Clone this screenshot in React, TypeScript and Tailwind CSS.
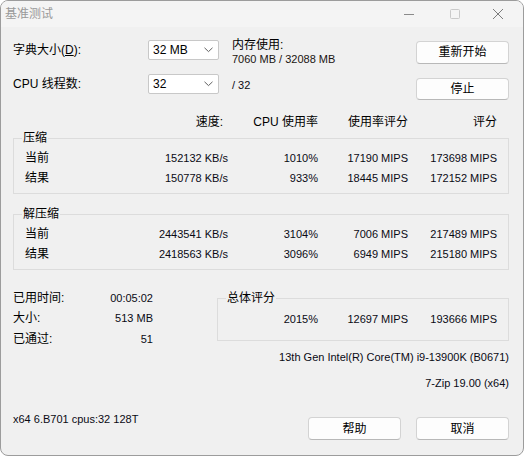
import React from "react";

const FONT = "font-['Liberation_Sans','Noto_Sans_CJK_SC',sans-serif]";

function Combo({ value }: { value: string }) {
  return (
    <div className="w-[71px] h-[20px] bg-white border border-[#c8c8c8] rounded-[2px] flex items-center justify-between pl-[4px] pr-[5px]">
      <span className="text-[12px] leading-[14px] text-black">{value}</span>
      <svg width="9" height="6" viewBox="0 0 9 6">
        <path d="M0.5 0.8 L4.5 4.6 L8.5 0.8" fill="none" stroke="#606060" strokeWidth="1" />
      </svg>
    </div>
  );
}

function Btn({ label }: { label: string }) {
  return (
    <div className="w-[93px] h-[23px] bg-[#fdfdfd] border border-[#d3d3d3] border-b-[#b8b8b8] rounded-[4px] flex items-center justify-center text-[12px] leading-[14px] text-black">
      {label}
    </div>
  );
}

function Group({ label, children, className }: { label: string; children: React.ReactNode; className?: string }) {
  return (
    <div className={"relative border border-[#dcdcdc] " + (className ?? "")}>
      <span className="absolute left-[8px] top-[-9px] px-[1px] bg-[#f0f0f0] text-[12px] leading-[16px] text-black">
        {label}
      </span>
      {children}
    </div>
  );
}

function DataRow({ label, cells }: { label: string; cells: string[] }) {
  return (
    <div className="flex h-[20px] items-center text-[11px] leading-[14px] text-[#0a0a14]">
      <div className="w-[134px] pl-[11px] text-[12px] text-black">{label}</div>
      <div className="w-[80px] text-right">{cells[0]}</div>
      <div className="w-[90px] text-right">{cells[1]}</div>
      <div className="w-[90px] text-right">{cells[2]}</div>
      <div className="w-[89px] text-right">{cells[3]}</div>
    </div>
  );
}

export default function App() {
  return (
    <div className={"w-[524px] h-[456px] bg-[#f0f0f0] border border-[#9c9c9c] rounded-[8px] overflow-hidden flex flex-col " + FONT}>
      {/* Title bar */}
      <div className="h-[26px] bg-[#f4f4f4] flex items-center shrink-0">
        <span className="ml-[4px] text-[12px] leading-[14px] text-[#999999]">基准测试</span>
        <div className="ml-auto flex items-center">
          <svg width="12" height="12" viewBox="0 0 12 12" className="mr-[34px]">
            <path d="M1 6.5 H11" stroke="#8a8a8a" strokeWidth="1" />
          </svg>
          <svg width="12" height="12" viewBox="0 0 12 12" className="mr-[31px]">
            <rect x="1.5" y="1.5" width="9" height="9" rx="1" fill="none" stroke="#c9c9c9" strokeWidth="1" />
          </svg>
          <svg width="12" height="12" viewBox="0 0 12 12" className="mr-[19px]">
            <path d="M1 1 L11 11 M11 1 L1 11" stroke="#7c7c7c" strokeWidth="1" />
          </svg>
        </div>
      </div>

      {/* Body */}
      <div className="flex-1 pl-[12px] pr-[14px] flex flex-col">
        {/* Top section */}
        <div className="mt-[13px] h-[60px] flex">
          <div className="flex flex-col">
            <div className="flex items-center h-[20px]">
              <div className="w-[135px] text-[12px] leading-[14px] text-black">
                字典大小(<span className="underline">D</span>):
              </div>
              <Combo value="32 MB" />
            </div>
            <div className="flex items-center h-[20px] mt-[14px]">
              <div className="w-[135px] text-[12px] leading-[14px] text-black">CPU 线程数:</div>
              <Combo value="32" />
            </div>
          </div>
          <div className="ml-[13px] mt-[-2px] flex flex-col">
            <div className="text-[12px] leading-[14px] text-black">内存使用:</div>
            <div className="text-[11px] leading-[14px] text-[#1a1410]">7060 MB / 32088 MB</div>
            <div className="mt-[12px] text-[11px] leading-[14px] text-[#0a0a14]">/ 32</div>
          </div>
          <div className="ml-auto mt-[1px] flex flex-col gap-[14px]">
            <Btn label="重新开始" />
            <Btn label="停止" />
          </div>
        </div>

        {/* Header */}
        <div className="mt-[14px] flex h-[16px] items-center text-[12px] leading-[14px] text-black">
          <div className="w-[135px]" />
          <div className="w-[75px] text-right">速度:</div>
          <div className="w-[95px] text-right">CPU 使用率</div>
          <div className="w-[90px] text-right">使用率评分</div>
          <div className="w-[89px] text-right">评分</div>
        </div>

        <Group label="压缩" className="mt-[8px] pt-[9px] pb-[5px]">
          <DataRow label="当前" cells={["152132 KB/s", "1010%", "17190 MIPS", "173698 MIPS"]} />
          <DataRow label="结果" cells={["150778 KB/s", "933%", "18445 MIPS", "172152 MIPS"]} />
        </Group>

        <Group label="解压缩" className="mt-[20px] pt-[9px] pb-[5px]">
          <DataRow label="当前" cells={["2443541 KB/s", "3104%", "7006 MIPS", "217489 MIPS"]} />
          <DataRow label="结果" cells={["2418563 KB/s", "3096%", "6949 MIPS", "215180 MIPS"]} />
        </Group>

        {/* Bottom section */}
        <div className="mt-[18px] flex">
          <div className="w-[140px] flex flex-col">
            <div className="h-[20px] flex items-center justify-between">
              <span className="text-[12px] leading-[14px] text-black">已用时间:</span>
              <span className="text-[11px] leading-[14px] text-[#0a0a14]">00:05:02</span>
            </div>
            <div className="h-[20px] flex items-center justify-between">
              <span className="text-[12px] leading-[14px] text-black">大小:</span>
              <span className="text-[11px] leading-[14px] text-[#0a0a14]">513 MB</span>
            </div>
            <div className="h-[21px] flex items-center justify-between">
              <span className="text-[12px] leading-[14px] text-black">已通过:</span>
              <span className="text-[11px] leading-[14px] text-[#0a0a14]">51</span>
            </div>
          </div>
          <Group label="总体评分" className="ml-[64px] flex-1 mt-[10px] pt-[10px] pb-[11px] self-start">
            <div className="flex h-[20px] items-center text-[11px] leading-[14px] text-[#0a0a14]">
              <div className="w-[100px] text-right">2015%</div>
              <div className="w-[90px] text-right">12697 MIPS</div>
              <div className="w-[89px] text-right">193666 MIPS</div>
            </div>
          </Group>
        </div>

        <div className="h-[16px] flex items-center justify-end text-[11px] leading-[14px] text-[#0a0a14]">
          13th Gen Intel(R) Core(TM) i9-13900K (B0671)
        </div>
        <div className="mt-[10px] h-[16px] flex items-center justify-end text-[11px] leading-[14px] text-[#0a0a14]">
          7-Zip 19.00 (x64)
        </div>

        {/* Footer */}
        <div className="mt-[20px] flex items-start">
          <div className="h-[16px] flex items-center text-[11px] leading-[14px] text-[#0a0a14]">
            x64 6.B701 cpus:32 128T
          </div>
          <div className="ml-auto mt-[6px] flex gap-[15px]">
            <Btn label="帮助" />
            <Btn label="取消" />
          </div>
        </div>
      </div>
    </div>
  );
}
